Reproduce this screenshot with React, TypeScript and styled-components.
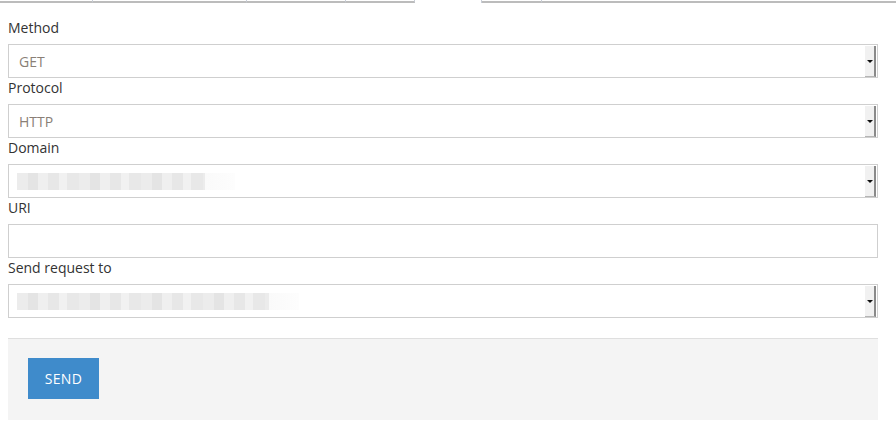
import React from 'react'
import styled, { createGlobalStyle } from 'styled-components'

const GlobalStyle = createGlobalStyle`
  html, body {
    margin: 0;
    padding: 0;
    background: #fff;
    font-family: 'Open Sans', 'Liberation Sans', sans-serif;
    font-size: 14px;
    color: #333;
  }
`

const TabStrip = styled.div`
  display: flex;
  height: 3px;
`

const Tab = styled.div<{ $w: number; $active?: boolean }>`
  flex: 0 0 ${({ $w }) => $w}px;
  box-sizing: border-box;
  border-bottom: ${({ $active }) => ($active ? 'none' : '2px solid #bcbcbc')};
  border-right: 1px solid #c9ced8;
  &:last-child {
    flex: 1;
    border-right: none;
  }
`

const Form = styled.div`
  width: 870px;
  margin: 15px 0 0 8px;
`

const Label = styled.div`
  line-height: 20px;
  height: 20px;
  margin-bottom: 6px;
  color: #333;
`

const Box = styled.div`
  box-sizing: border-box;
  height: 34px;
  border: 1px solid #cfcfcf;
  display: flex;
  align-items: stretch;
  background: #fff;
`

const Value = styled.div`
  flex: 1;
  display: flex;
  align-items: center;
  padding-left: 10px;
  color: #8a7f76;
`

const Arrow = styled.div`
  flex: 0 0 9px;
  margin: 1px 1px 0 0;
  background: #f1f1f1;
  border-right: 2px solid #8a8a8a;
  border-bottom: 1px solid #b5b5b5;
  display: flex;
  align-items: center;
  justify-content: center;
  &::after {
    content: '';
    border-left: 3px solid transparent;
    border-right: 3px solid transparent;
    border-top: 3px solid #111;
  }
`

const Blur = styled.div<{ $w: number; $fade: number }>`
  width: ${({ $w }) => $w}px;
  height: 17px;
  margin-left: -2px;
  filter: blur(0.6px);
  background:
    linear-gradient(90deg, rgba(255,255,255,0) 0, rgba(255,255,255,0) ${({ $w, $fade }) => $w - $fade}px, #fafafa ${({ $w, $fade }) => $w - $fade}px, #fdfdfd 100%),
    repeating-linear-gradient(90deg, #ececec 0 11px, #e4e4e4 11px 21px, #efefef 21px 31px, #e7e7e7 31px 42px, #f1f1f1 42px 50px, #e8e8e8 50px 62px);
`

const Panel = styled.div`
  margin-top: 20px;
  background: #f4f4f4;
  border-top: 1px solid #dfdfdf;
  padding: 19px 20px 21px;
`

const Button = styled.button`
  height: 41px;
  width: 71px;
  padding: 0;
  border: none;
  background: #3f8bcb;
  color: #fff;
  font-family: 'Open Sans', 'Liberation Sans', sans-serif;
  font-size: 14px;
  letter-spacing: 0.3px;
  cursor: pointer;
`

const tabs = [93, 154, 99, 69, 67, 60, 0]

type Field = { label: string; kind: 'select' | 'input'; value?: string; blur?: [number, number] }

const fields: Field[] = [
  { label: 'Method', kind: 'select', value: 'GET' },
  { label: 'Protocol', kind: 'select', value: 'HTTP' },
  { label: 'Domain', kind: 'select', blur: [218, 30] },
  { label: 'URI', kind: 'input' },
  { label: 'Send request to', kind: 'select', blur: [282, 30] },
]

const App = () => (
  <>
    <GlobalStyle />
    <TabStrip>
      {tabs.map((w, i) => (
        <Tab key={i} $w={w} $active={i === 4} />
      ))}
    </TabStrip>
    <Form>
      {fields.map((f) => (
        <div key={f.label}>
          <Label>{f.label}</Label>
          <Box>
            <Value>
              {f.value}
              {f.blur && <Blur $w={f.blur[0]} $fade={f.blur[1]} />}
            </Value>
            {f.kind === 'select' && <Arrow />}
          </Box>
        </div>
      ))}
      <Panel>
        <Button type="button">SEND</Button>
      </Panel>
    </Form>
  </>
)

export default App
